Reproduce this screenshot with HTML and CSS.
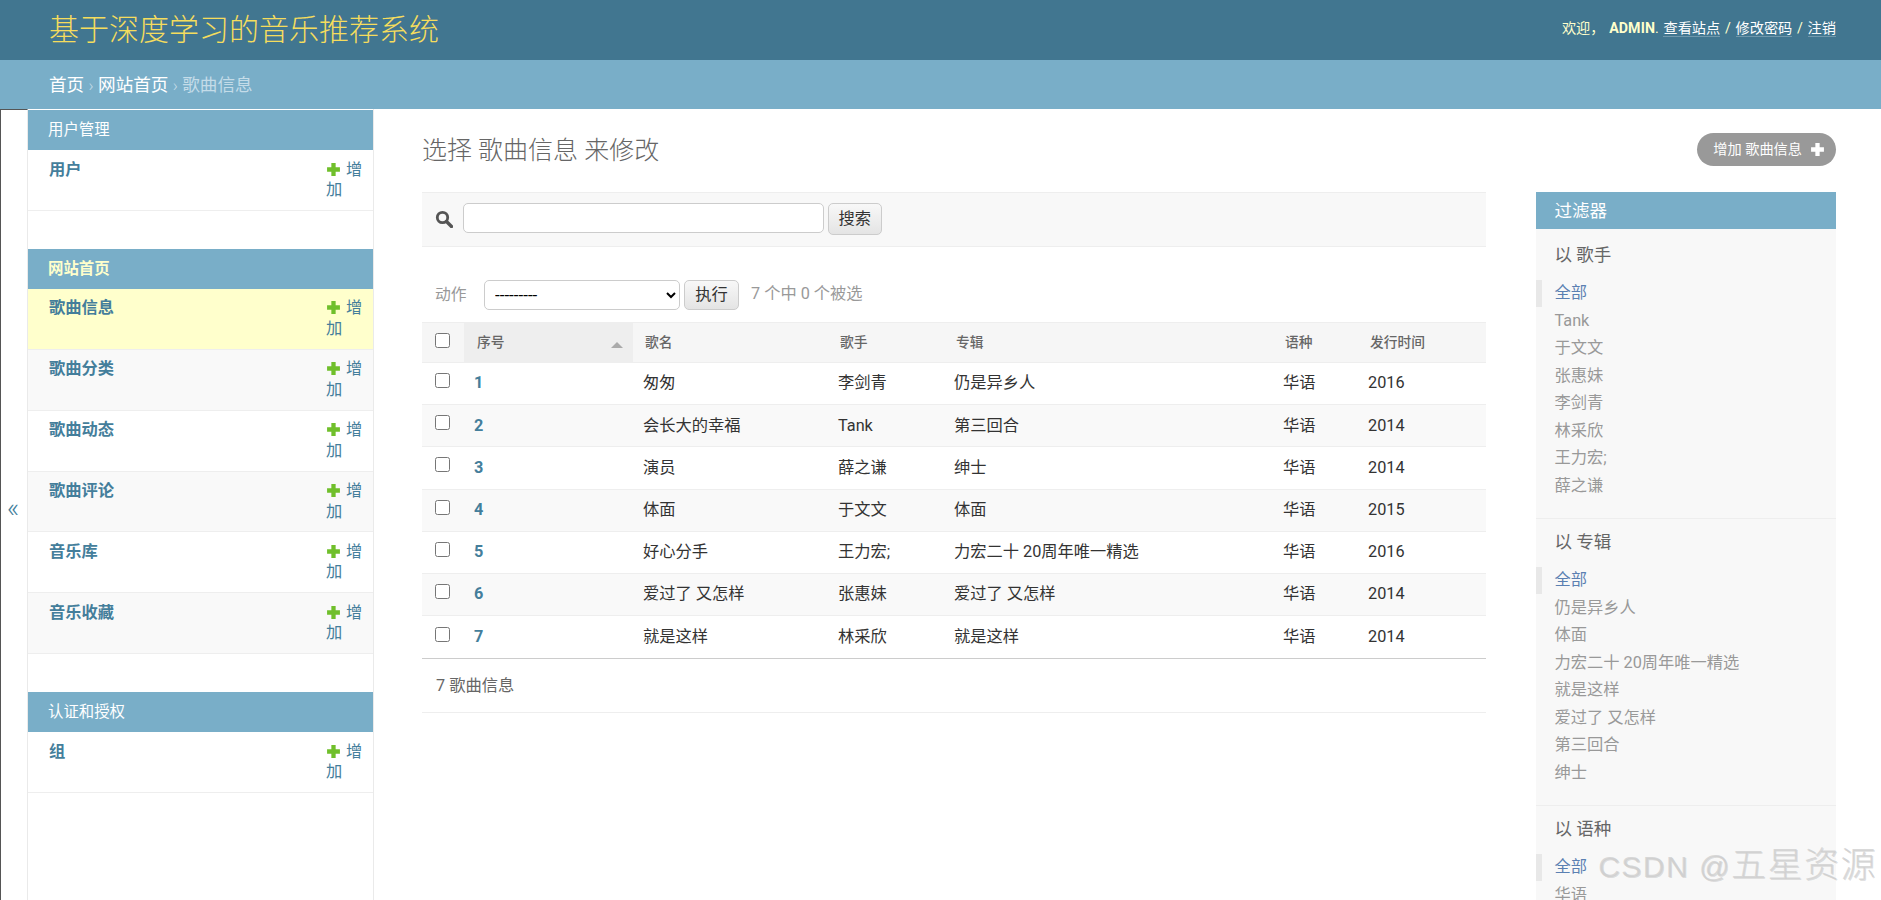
FILE: index.html
```html
<!DOCTYPE html>
<html lang="zh-CN">
<head>
<meta charset="utf-8">
<title>选择 歌曲信息 来修改</title>
<link rel="stylesheet" href="styles.css">
</head>
<body>
<header class="header">
  <h1 class="brand">基于深度学习的音乐推荐系统</h1>
  <div class="user-tools">欢迎， <strong class="user-name">ADMIN</strong>. <a href="#">查看站点</a> / <a href="#">修改密码</a> / <a href="#">注销</a></div>
</header>
<nav class="crumbs"><a href="#">首页</a> <span class="sep">›</span> <a href="#">网站首页</a> <span class="sep">›</span> 歌曲信息</nav>
<div class="main">
  <button class="toggle" type="button">«</button>
  <aside class="sidebar">
    <section class="app">
      <h2 class="app-title">用户管理</h2>
      <div class="model"><a class="model-name" href="#">用户</a><a class="add" href="#"><svg class="plus" viewBox="0 0 14 14"><path d="M5 1h4v4h4v4H9v4H5V9H1V5h4z"/></svg> 增加</a></div>
    </section>
    <section class="app">
      <h2 class="app-title app-current">网站首页</h2>
      <div class="model model-current"><a class="model-name" href="#">歌曲信息</a><a class="add" href="#"><svg class="plus" viewBox="0 0 14 14"><path d="M5 1h4v4h4v4H9v4H5V9H1V5h4z"/></svg> 增加</a></div>
      <div class="model model-alt"><a class="model-name" href="#">歌曲分类</a><a class="add" href="#"><svg class="plus" viewBox="0 0 14 14"><path d="M5 1h4v4h4v4H9v4H5V9H1V5h4z"/></svg> 增加</a></div>
      <div class="model"><a class="model-name" href="#">歌曲动态</a><a class="add" href="#"><svg class="plus" viewBox="0 0 14 14"><path d="M5 1h4v4h4v4H9v4H5V9H1V5h4z"/></svg> 增加</a></div>
      <div class="model model-alt"><a class="model-name" href="#">歌曲评论</a><a class="add" href="#"><svg class="plus" viewBox="0 0 14 14"><path d="M5 1h4v4h4v4H9v4H5V9H1V5h4z"/></svg> 增加</a></div>
      <div class="model"><a class="model-name" href="#">音乐库</a><a class="add" href="#"><svg class="plus" viewBox="0 0 14 14"><path d="M5 1h4v4h4v4H9v4H5V9H1V5h4z"/></svg> 增加</a></div>
      <div class="model model-alt"><a class="model-name" href="#">音乐收藏</a><a class="add" href="#"><svg class="plus" viewBox="0 0 14 14"><path d="M5 1h4v4h4v4H9v4H5V9H1V5h4z"/></svg> 增加</a></div>
    </section>
    <section class="app">
      <h2 class="app-title">认证和授权</h2>
      <div class="model"><a class="model-name" href="#">组</a><a class="add" href="#"><svg class="plus" viewBox="0 0 14 14"><path d="M5 1h4v4h4v4H9v4H5V9H1V5h4z"/></svg> 增加</a></div>
    </section>
  </aside>
  <main class="content">
    <div class="title-row">
      <h1 class="page-title">选择 歌曲信息 来修改</h1>
      <a class="add-pill" href="#">增加 歌曲信息<svg class="pill-plus" viewBox="0 0 14 14"><path d="M5 1h4v4h4v4H9v4H5V9H1V5h4z"/></svg></a>
    </div>
    <div class="columns">
      <div class="changelist">
        <form class="search">
          <svg class="search-icon" viewBox="0 0 18 18"><circle cx="7.5" cy="7.5" r="5.2" fill="none" stroke="#555" stroke-width="2.8"/><path d="M11.5 11.5l5 5" stroke="#555" stroke-width="3.4" stroke-linecap="round"/></svg>
          <input class="search-input" type="text">
          <button class="btn btn-search" type="button">搜索</button>
        </form>
        <div class="actions">
          <span class="actions-label">动作</span>
          <select class="action-select"><option>---------</option></select>
          <button class="btn btn-go" type="button">执行</button>
          <span class="counter">7 个中 0 个被选</span>
        </div>
        <table class="results">
          <colgroup><col class="c-check"><col class="c-id"><col class="c-name"><col class="c-singer"><col class="c-album"><col class="c-lang"><col class="c-date"></colgroup>
          <thead>
            <tr><th class="check-cell"><input class="check check-head" type="checkbox"></th><th class="sorted">序号<span class="sort-arrow"></span></th><th>歌名</th><th>歌手</th><th>专辑</th><th>语种</th><th>发行时间</th></tr>
          </thead>
          <tbody>
            <tr><td class="check-cell"><input class="check" type="checkbox"></td><td class="id"><a href="#">1</a></td><td>匆匆</td><td>李剑青</td><td>仍是异乡人</td><td>华语</td><td>2016</td></tr>
            <tr class="alt"><td class="check-cell"><input class="check" type="checkbox"></td><td class="id"><a href="#">2</a></td><td>会长大的幸福</td><td>Tank</td><td>第三回合</td><td>华语</td><td>2014</td></tr>
            <tr><td class="check-cell"><input class="check" type="checkbox"></td><td class="id"><a href="#">3</a></td><td>演员</td><td>薛之谦</td><td>绅士</td><td>华语</td><td>2014</td></tr>
            <tr class="alt"><td class="check-cell"><input class="check" type="checkbox"></td><td class="id"><a href="#">4</a></td><td>体面</td><td>于文文</td><td>体面</td><td>华语</td><td>2015</td></tr>
            <tr><td class="check-cell"><input class="check" type="checkbox"></td><td class="id"><a href="#">5</a></td><td>好心分手</td><td>王力宏;</td><td>力宏二十 20周年唯一精选</td><td>华语</td><td>2016</td></tr>
            <tr class="alt"><td class="check-cell"><input class="check" type="checkbox"></td><td class="id"><a href="#">6</a></td><td>爱过了 又怎样</td><td>张惠妹</td><td>爱过了 又怎样</td><td>华语</td><td>2014</td></tr>
            <tr><td class="check-cell"><input class="check" type="checkbox"></td><td class="id"><a href="#">7</a></td><td>就是这样</td><td>林采欣</td><td>就是这样</td><td>华语</td><td>2014</td></tr>
          </tbody>
        </table>
        <p class="paginator">7 歌曲信息</p>
      </div>
      <aside class="filter">
        <h2 class="filter-title">过滤器</h2>
        <h3 class="filter-by">以 歌手</h3>
        <ul class="filter-list">
          <li class="selected"><a href="#">全部</a></li><li><a href="#">Tank</a></li><li><a href="#">于文文</a></li><li><a href="#">张惠妹</a></li><li><a href="#">李剑青</a></li><li><a href="#">林采欣</a></li><li><a href="#">王力宏;</a></li><li><a href="#">薛之谦</a></li>
        </ul>
        <h3 class="filter-by">以 专辑</h3>
        <ul class="filter-list">
          <li class="selected"><a href="#">全部</a></li><li><a href="#">仍是异乡人</a></li><li><a href="#">体面</a></li><li><a href="#">力宏二十 20周年唯一精选</a></li><li><a href="#">就是这样</a></li><li><a href="#">爱过了 又怎样</a></li><li><a href="#">第三回合</a></li><li><a href="#">绅士</a></li>
        </ul>
        <h3 class="filter-by">以 语种</h3>
        <ul class="filter-list">
          <li class="selected"><a href="#">全部</a></li><li><a href="#">华语</a></li>
        </ul>
      </aside>
    </div>
  </main>
</div>
<div class="watermark">CSDN @<span class="watermark-cjk">五星资源</span></div>
</body>
</html>
```
FILE: styles.css
```css
* { box-sizing: border-box; }
html, body { margin: 0; height: 900px; overflow: hidden; }
body {
  position: relative;
  width: 1881px;
  display: flex;
  flex-direction: column;
  background: #fff;
  color: #333;
  font: 16.25px/20.5px Roboto, "Noto Sans CJK SC", "Lucida Grande", Verdana, Arial, sans-serif;
}
a { text-decoration: none; }

.header {
  flex: none;
  height: 60px;
  padding: 0 45px 0 49px;
  background: #417690;
  display: flex;
  justify-content: space-between;
  align-items: center;
  color: #ffc;
}
.brand { margin: 0; font-size: 30px; line-height: 60px; font-weight: 300; color: #f5dd5d; }
.user-tools { font-size: 14.2px; line-height: 20px; font-weight: 400; word-spacing: 1.2px; color: #ffc; margin-top: -5px; }
.user-name { font-weight: 700; letter-spacing: .1px; }
.user-tools a { color: #fff; border-bottom: 1px solid rgba(255,255,255,.25); }

.crumbs {
  flex: none;
  height: 49px;
  padding: 0 49px;
  background: #79aec8;
  color: #c4dce8;
  font-size: 17.6px;
  font-weight: 400;
  line-height: 50px;
}
.crumbs a { color: #fff; }
.sep { font-size: 17px; font-weight: 300; }

.main { flex: 1; display: flex; min-height: 0; }
.toggle {
  flex: none;
  width: 28px;
  padding: 6px 2px 0 0;
  border: 0;
  border-left: 1px solid #555;
  border-top: 1px solid #555;
  border-right: 1px solid #eaeaea;
  background: #fff;
  color: #447e9b;
  font-family: Roboto, sans-serif;
  font-size: 27px;
  font-weight: 300;
  line-height: 1;
}
.sidebar {
  flex: none;
  width: 346px;
  padding-top: 1px;
  border-right: 1px solid #eaeaea;
}
.app { margin-bottom: 38px; }
.app-title {
  margin: 0;
  height: 40px;
  padding: 0 20px;
  background: #79aec8;
  color: #fff;
  font-size: 15.4px;
  line-height: 41px;
  font-weight: 400;
}
.app-current { color: #ffc; font-weight: 700; }
.model {
  height: 60.9px;
  padding: 9.5px 10px 0 21px;
  display: flex;
  justify-content: space-between;
  border-bottom: 1px solid #eee;
}
.model-alt { background: #f9f9f9; }
.model-current { background: #ffc; }
.model-name { color: #447e9b; font-weight: 700; }
.add { width: 37px; color: #447e9b; font-weight: 400; }
.plus { width: 15px; height: 15px; margin: 0 1px 0 0; vertical-align: -2px; fill: #70bf2b; }

.content { flex: 1; min-width: 0; padding: 0 45px 0 48px; }
.title-row { height: 83px; display: flex; justify-content: space-between; align-items: flex-start; }
.page-title { margin: 26px 0 0; font-size: 25px; line-height: 31px; font-weight: 300; color: #666; }
.add-pill {
  margin-top: 24px;
  height: 33px;
  padding: 0 11px 0 16px;
  border-radius: 17px;
  background: #999;
  color: #fff;
  font-size: 14.2px;
  line-height: 33px;
  display: flex;
  align-items: center;
}
.pill-plus { width: 15px; height: 15px; margin-left: 8px; fill: #fff; }

.columns { display: flex; align-items: flex-start; gap: 50px; }
.changelist { flex: none; width: 1064px; }
.search {
  height: 55px;
  padding: 10px 14px 0 13px;
  display: flex;
  align-items: flex-start;
  background: #f8f8f8;
  border-top: 1px solid #eee;
  border-bottom: 1px solid #eee;
}
.search-icon { width: 18px; height: 18px; margin: 7px 10px 0 0; flex: none; }
.search-input {
  width: 361px;
  height: 30px;
  padding: 2px 6px;
  border: 1px solid #ccc;
  border-radius: 5px;
  background: #fff;
}
.btn {
  height: 32px;
  margin-left: 4px;
  padding: 0 9.5px;
  border: 1px solid #ccc;
  border-radius: 5px;
  background: linear-gradient(#f8f8f8, #e4e4e4);
  color: #333;
  font: 16.25px/1 Roboto, "Noto Sans CJK SC", sans-serif;
  font-weight: 400;
}
.actions { height: 75px; padding: 33px 0 0 13px; display: flex; align-items: flex-start; }
.actions-label { width: 49px; color: #999; font-weight: 400; line-height: 30px; font-size: 15.8px; }
.action-select {
  width: 196px;
  height: 30px;
  padding: 0 6px;
  border: 1px solid #ccc;
  border-radius: 5px;
  background: #fff;
  color: #000;
  font: 17px Roboto, sans-serif;
}
.btn-go { width: 55px; height: 30px; padding: 0; }
.counter { margin-left: 12px; color: #999; font-size: 16.25px; font-weight: 400; line-height: 28px; }

.results { width: 1064px; table-layout: fixed; border-collapse: collapse; }
.c-check { width: 42px; }
.c-id { width: 169px; }
.c-name { width: 195px; }
.c-singer { width: 116px; }
.c-album { width: 329px; }
.c-lang { width: 85px; }
.c-date { width: 128px; }
.results th {
  height: 40px;
  padding: 0 12px;
  background: #f6f6f6;
  border-top: 1px solid #eee;
  border-bottom: 1px solid #eee;
  color: #666;
  font-size: 13.75px;
  font-weight: 500;
  text-align: left;
}
.results th.sorted { position: relative; background: #eee; padding-left: 13px; }
.sort-arrow {
  position: absolute;
  right: 10px;
  top: 19px;
  border: 6px solid transparent;
  border-top: 0;
  border-bottom: 6px solid #aaa;
}
.results td {
  height: 42.2px;
  padding: 0 10px;
  border-bottom: 1px solid #eee;
  font-weight: 400;
  color: #333;
  vertical-align: middle;
}
.results tbody tr:last-child td { height: 43px; border-bottom-color: #ccc; }
.alt td { background: #f9f9f9; }
.results th.check-cell, .results td.check-cell { padding: 0 0 6px 13px; }
.results th.check-cell { padding-bottom: 4px; }
.check { width: 15px; height: 15px; margin: 0; display: block; }
.id a { color: #447e9b; font-weight: 700; }
.paginator {
  margin: 0;
  height: 54px;
  padding: 0 14px;
  color: #666;
  font-weight: 400;
  line-height: 54px;
  border-bottom: 1px solid #eee;
}

.filter { flex: none; width: 300px; background: #f8f8f8; }
.filter-title {
  margin: 0 0 3.2px;
  height: 37px;
  padding: 0 18.5px;
  background: #79aec8;
  color: #fff;
  font-size: 17.5px;
  line-height: 38px;
  font-weight: 400;
}
.filter-by {
  margin: 0;
  padding: 12px 18.5px 13.5px;
  font-size: 17.5px;
  line-height: 22px;
  font-weight: 400;
  color: #666;
}
.filter-list {
  list-style: none;
  margin: 0;
  padding: 0 0 18.5px;
  border-bottom: 1px solid #eee;
  font-size: 16.25px;
  line-height: 20.5px;
}
.filter-list li { padding: 3.5px 0 3.5px 18.5px; }
.filter-list a { color: #999; font-weight: 400; }
.filter-list .selected { border-left: 6px solid #e8e8e8; padding-left: 12.5px; }
.filter-list .selected a { color: #5b80b2; }

.watermark {
  position: absolute;
  right: 4px;
  bottom: 13px;
  color: rgba(205,205,205,.75);
  font-size: 30px;
  line-height: 40px;
  font-family: "Liberation Sans", "Noto Sans CJK SC", sans-serif;
  letter-spacing: 1.5px;
  text-shadow: 1px 1px 0 rgba(150,150,150,.3);
}
.watermark-cjk { font-size: 35px; font-weight: 300; }
```
